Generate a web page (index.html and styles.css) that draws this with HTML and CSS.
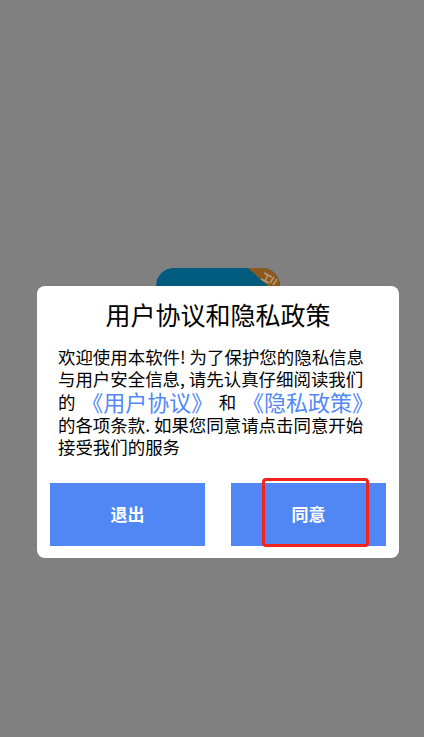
FILE: index.html
```html
<!DOCTYPE html>
<html lang="zh-CN">
<head>
<meta charset="utf-8">
<title>用户协议和隐私政策</title>
<link rel="stylesheet" href="styles.css">
</head>
<body>
<div class="screen">
  <div class="stage">
    <div class="app-icon">
      <svg class="ribbon" width="124" height="18" viewBox="0 0 124 18" aria-hidden="true">
        <polygon points="92,0 124,0 124,18 112,18" fill="#8a5a1e"/>
        <path d="M108 5l8 4M112 7l-3 6M105 11l8 4" stroke="#b79a78" stroke-width="1.5" fill="none"/>
        <path d="M118 9l-4 6M121 11l-4 6" stroke="#b79a78" stroke-width="1.5" fill="none"/>
      </svg>
    </div>
    <div class="dialog">
      <h1 class="title">用户协议和隐私政策</h1>
      <div class="body">
        <p class="line">欢迎使用本软件! 为了保护您的隐私信息</p>
        <p class="line">与用户安全信息, 请先认真仔细阅读我们</p>
        <p class="line links"><span>的</span><a class="link">《用户协议》</a><span>和</span><a class="link">《隐私政策》</a></p>
        <p class="line">的各项条款. 如果您同意请点击同意开始</p>
        <p class="line">接受我们的服务</p>
      </div>
      <div class="actions">
        <button class="btn">退出</button>
        <button class="btn">同意</button>
      </div>
      <div class="highlight"></div>
    </div>
  </div>
</div>
</body>
</html>
```
FILE: styles.css
```css
* { box-sizing: border-box; }
html, body { margin: 0; padding: 0; }
body {
  font-family: "Noto Sans CJK SC", "Liberation Sans", sans-serif;
  background: #808080;
}
.screen {
  width: 424px;
  height: 737px;
  background: #808080;
  overflow: hidden;
  padding: 268px 25px 0 37px;
}
.stage { display: flex; flex-direction: column; align-items: center; }
.app-icon {
  width: 124px;
  height: 18px;
  background: #005b7f;
  border-radius: 24px 24px 0 0;
  overflow: hidden;
}
.ribbon { display: block; }
.dialog {
  position: relative;
  width: 362px;
  height: 272px;
  background: #fff;
  border-radius: 8px;
  padding: 12px 13px 12px;
  display: flex;
  flex-direction: column;
}
.title {
  margin: 0;
  font-size: 25px;
  line-height: 32px;
  font-weight: 400;
  color: #000;
  text-align: center;
}
.body { margin: 16px 0 0 8px; width: 330px; height: 114px; color: #000; font-size: 17.45px; }
.line { margin: 0; height: 22px; line-height: 22px; white-space: nowrap; }
.links {
  width: 316px;
  height: 24px;
  line-height: 24px;
  display: flex;
  justify-content: space-between;
  align-items: center;
}
.link { display: block; color: #5188f6; font-size: 22px; line-height: 24px; margin-bottom: 2px; }
.actions { display: flex; justify-content: space-between; margin-top: 23px; }
.btn {
  width: 155px;
  height: 63px;
  border: 0;
  border-radius: 0;
  padding: 0 0 2px;
  background: #5087f5;
  color: #fff;
  font: 700 17px "Noto Sans CJK SC", sans-serif;
}
.highlight {
  position: absolute;
  left: 225px;
  top: 192px;
  width: 107px;
  height: 69px;
  border: 3px solid #f2231c;
  border-radius: 4px;
}
```
